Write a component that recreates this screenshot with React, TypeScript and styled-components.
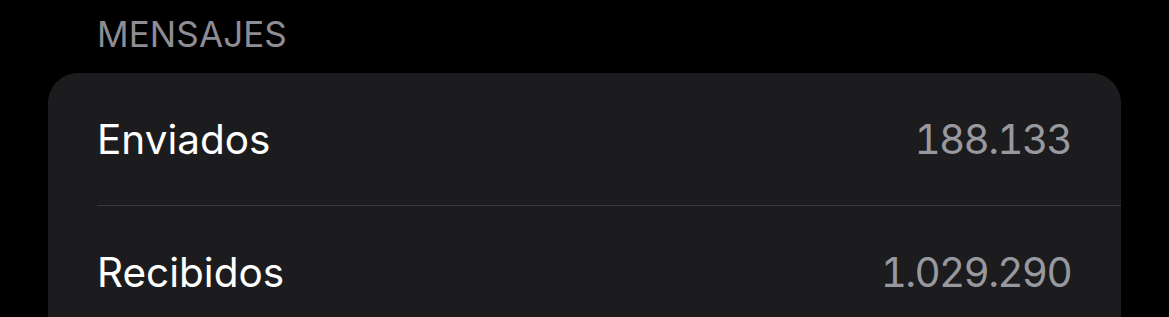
import React from "react";
import styled, { createGlobalStyle } from "styled-components";

const Global = createGlobalStyle`
  html, body { margin: 0; padding: 0; background: #000; }
  body { font-family: Inter, "Noto Sans", sans-serif; -webkit-font-smoothing: antialiased; }
`;

const Page = styled.div`
  width: 1169px;
  height: 317px;
  overflow: hidden;
  background: #000;
  display: flex;
  flex-direction: column;
`;

const SectionHeader = styled.div`
  flex: none;
  padding: 14px 0 0 97px;
  height: 73px;
  box-sizing: border-box;
  font-size: 35px;
  line-height: 40px;
  color: #8d8d93;
  letter-spacing: 0.1px;
`;

const Card = styled.div`
  flex: none;
  margin-left: 48px;
  width: 1073px;
  background: #1c1c1e;
  border-radius: 30px;
  display: flex;
  flex-direction: column;
  height: 400px;
`;

const Row = styled.div<{ $divider?: boolean }>`
  flex: none;
  margin-left: 49px;
  padding-right: 50px;
  height: 133px;
  display: flex;
  align-items: center;
  justify-content: space-between;
  box-sizing: border-box;
  border-bottom: ${(p) => (p.$divider ? "1px solid #39393c" : "none")};
`;

const Label = styled.span`
  font-size: 40.5px;
  color: #fff;
`;

const Value = styled.span`
  font-size: 40.5px;
  color: #98989f;
  font-variant-numeric: tabular-nums;
  letter-spacing: -1.7px;
`;

export default function App() {
  return (
    <Page>
      <Global />
      <SectionHeader>MENSAJES</SectionHeader>
      <Card>
        <Row $divider>
          <Label>Enviados</Label>
          <Value>188.133</Value>
        </Row>
        <Row>
          <Label>Recibidos</Label>
          <Value>1.029.290</Value>
        </Row>
      </Card>
    </Page>
  );
}
